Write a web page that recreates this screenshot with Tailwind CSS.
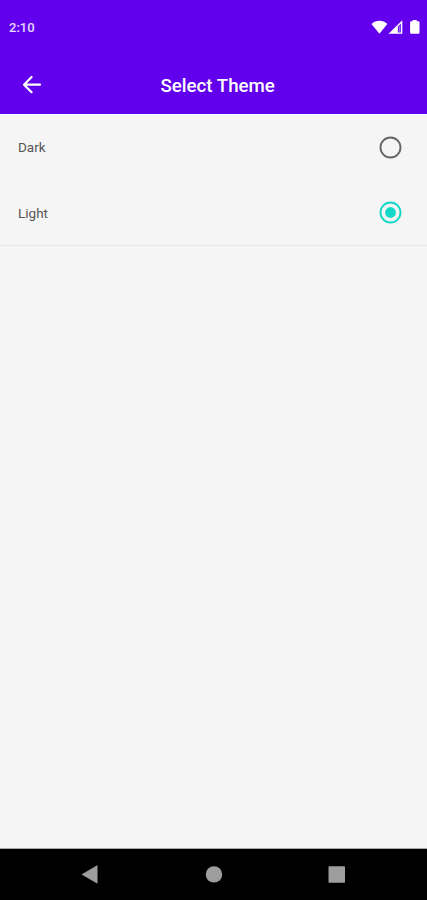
<!DOCTYPE html>
<html lang="en">
<head>
<meta charset="utf-8">
<title>Select Theme</title>
<script src="https://cdn.jsdelivr.net/npm/@tailwindcss/browser@4"></script>
</head>
<body class="flex h-[900px] w-[427px] flex-col overflow-hidden bg-[#f5f5f5] font-['Roboto',sans-serif]">
<header class="h-[114px] shrink-0 bg-[#6200ee] text-white">
  <div class="flex h-[56px] items-center justify-between pr-[7px] pl-[9px]">
    <span class="pb-[2px] text-[13px] leading-none font-medium text-white/85">2:10</span>
    <svg class="h-[16px] w-[49px]" viewBox="0 0 49 16" fill="white">
      <path d="M.5 4C5 -.2 11.8 -.2 16.3 4L8.4 13.8Z"/>
      <path d="M17.5 13.8L31.3.2V13.8Z"/>
      <path d="M26.9 6.4L29.8 3.6V12.4H26.9Z" fill="#6200ee"/>
      <path d="M27.8 5.5H29V12.4H27.8Z" fill="white" fill-opacity=".4"/>
      <path d="M41.6 1.2V0h4.2v1.2h1.7q1 0 1 1V12.8q0 1-1 1h-7.4q-1 0-1-1V2.2q0-1 1-1Z"/>
    </svg>
  </div>
  <div class="flex h-[58px] items-center pl-[22px]">
    <svg class="h-[20px] w-[20px]" viewBox="0 0 20 20" fill="none" stroke="white" stroke-width="2.2" stroke-linecap="round" stroke-linejoin="round"><path d="M18 9.7H2M9.6 2L2 9.7L9.6 17.2"/></svg>
    <h1 class="ml-[118.5px] pt-[2px] text-[18.7px] leading-none font-medium whitespace-nowrap">Select Theme</h1>
  </div>
</header>
<main class="flex-1 border-t border-white text-[13.5px] text-[#555]">
  <label class="flex h-[65px] items-center justify-between border-b border-[#f1f1f1] pr-[25px] pl-[18px]">
    <span class="pt-px">Dark</span>
    <svg class="h-[23px] w-[23px]" viewBox="0 0 23 23" fill="none"><circle cx="11.5" cy="11.5" r="10" stroke="#666" stroke-width="1.9"/></svg>
  </label>
  <label class="flex h-[66px] items-center justify-between border-b border-[#e9e9e9] pr-[25px] pl-[18px]">
    <span class="pt-px">Light</span>
    <svg class="h-[23px] w-[23px]" viewBox="0 0 23 23" fill="none"><circle cx="11.5" cy="11.5" r="10" stroke="#13d8c6" stroke-width="1.9"/><circle cx="11.5" cy="11.5" r="5.4" fill="#13d8c6"/></svg>
  </label>
</main>
<nav class="flex h-[52px] shrink-0 items-center border-t border-[#aaa] bg-black pl-[81px]">
  <svg class="h-[20px] w-[266px]" viewBox="0 0 266 20" fill="#9e9e9e"><path d="M1 9.4L16.2 .6V18.2Z" stroke="#9e9e9e" stroke-width=".6" stroke-linejoin="round"/><circle cx="133" cy="9.4" r="8.2"/><rect x="247.5" y="1.2" width="16.5" height="16.5" rx=".8"/></svg>
</nav>
</body>
</html>
